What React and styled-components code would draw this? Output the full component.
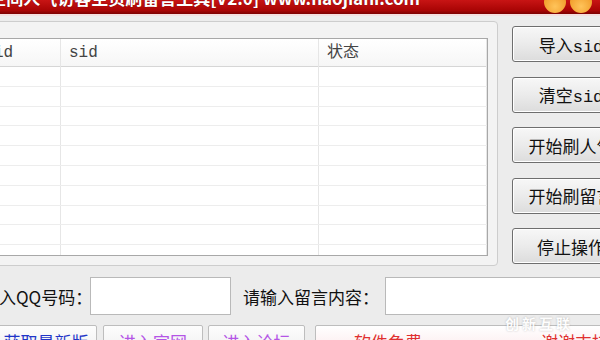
import React from 'react';
import styled, { createGlobalStyle } from 'styled-components';

const GlobalStyle = createGlobalStyle`
    body {
        margin: 0;
        background: #ececec;
        overflow: hidden;
        font-family: "Liberation Mono", "Noto Sans CJK SC", monospace;
    }
`
const Window = styled.div`
    position: relative;
    width: 680px;
    height: 340px;
    margin-left: -40px;
    overflow: hidden;
`
const TitleBar = styled.div`
    display: flex;
    align-items: flex-start;
    height: 14px;
    padding-right: 44px;
    overflow: hidden;
    background: linear-gradient(#c81414, #a80404 75%, #7c0000);
    border-bottom: 2px solid #f3dede;
`
const Title = styled.div`
    flex: 1;
    margin: -12px 0 0 3px;
    color: #fff;
    font: bold 17px "Noto Sans CJK SC", sans-serif;
    line-height: 20px;
    white-space: nowrap;
    text-shadow: 0 0 1px #600;
`
const Knob = styled.span`
    width: 22px;
    height: 22px;
    margin: -9px 4px 0 0;
    border-radius: 50%;
    background: radial-gradient(circle at 50% 70%, #ffc45a, #ea8a14);
    flex-shrink: 0;
`
const Main = styled.div`
    display: flex;
    margin-top: 5px;
`
const Panel = styled.div`
    width: 538px;
    height: 245px;
    box-sizing: border-box;
    padding: 16px 9px 9px 24px;
    border: 1px solid #cdcdcd;
    border-radius: 4px;
    background: #f3f3f3;
`
const List = styled.div`
    height: 100%;
    box-sizing: border-box;
    border: 1px solid #a8a8a8;
    background: #fff;
    overflow: hidden;
`
const Row = styled.div`
    display: grid;
    grid-template-columns: 75px 258px 1fr;
    height: ${p => p.$head ? '28px' : '19.8px'};
    box-sizing: border-box;
    border-bottom: 1px solid ${p => p.$head ? '#d6d6d6' : '#ededed'};
    background: ${p => p.$head ? 'linear-gradient(#ffffff, #f6f6f6)' : '#fff'};
`
const Cell = styled.div`
    padding-left: 8px;
    border-right: 1px solid #e6e6e6;
    color: #444;
    font-size: 16px;
    line-height: 28px;
`
const Side = styled.div`
    display: flex;
    flex-direction: column;
    gap: 14.5px;
    padding-top: 5px;
    margin-left: 14px;
`
const SideButton = styled.button`
    width: 118px;
    height: 36px;
    padding: 0;
    border: 1px solid #6e6e6e;
    border-radius: 3px;
    background: linear-gradient(#f7f7f7, #ebebeb 50%, #dcdcdc);
    box-shadow: inset 0 0 0 1px #fff;
    color: #111;
    font: 17px "Liberation Mono", "Noto Sans CJK SC", monospace;
    white-space: nowrap;
`
const InputRow = styled.div`
    display: flex;
    align-items: center;
    margin-top: 11px;
    padding-left: 5px;
`
const Label = styled.span`
    width: ${p => p.$w}px;
    margin-left: ${p => p.$gap || 0}px;
    color: #111;
    font: 17px "Noto Sans CJK SC", sans-serif;
    white-space: nowrap;
    flex-shrink: 0;
`
const Field = styled.input`
    width: ${p => p.$w}px;
    height: 38px;
    box-sizing: border-box;
    border: 1px solid #b9b9b9;
    background: #fff;
    outline: none;
    flex-shrink: 0;
`
const BottomRow = styled.div`
    display: flex;
    margin-top: 10px;
    padding-left: 35px;
`
const LinkButton = styled.button`
    width: ${p => p.$w}px;
    height: 30px;
    margin-left: ${p => p.$gap || 0}px;
    padding: 4px 0 0 ${p => p.$indent || 0}px;
    border: 1px solid #bdbdbd;
    border-radius: 2px;
    background: ${p => p.$bg || 'linear-gradient(#fdfdfd, #efefef)'};
    color: ${p => p.$color};
    font: 17px "Noto Sans CJK SC", sans-serif;
    line-height: 20px;
    text-align: ${p => p.$indent ? 'left' : 'center'};
    white-space: nowrap;
    flex-shrink: 0;
`
const Watermark = styled.div`
    position: absolute;
    left: 545px;
    top: 313px;
    color: #fff;
    font: bold 14px "Noto Sans CJK SC", sans-serif;
    letter-spacing: 3px;
    opacity: 0.9;
    text-shadow: 0 0 2px rgba(0, 0, 0, 0.25);
`

const rows = Array.from({ length: 10 });

const App = () => {
    return <Window>
        <GlobalStyle />
        <TitleBar>
            <Title>QQ空间人气访客主页刷留言工具[V2.0] www.haojiani.com</Title>
            <Knob />
            <Knob />
        </TitleBar>
        <Main>
            <Panel>
                <List>
                    <Row $head>
                        <Cell>id</Cell>
                        <Cell>sid</Cell>
                        <Cell>状态</Cell>
                    </Row>
                    {rows.map((_, i) => (
                        <Row key={i}>
                            <Cell />
                            <Cell />
                            <Cell />
                        </Row>
                    ))}
                </List>
            </Panel>
            <Side>
                <SideButton>导入sid</SideButton>
                <SideButton>清空sid</SideButton>
                <SideButton>开始刷人气</SideButton>
                <SideButton>开始刷留言</SideButton>
                <SideButton>停止操作</SideButton>
            </Side>
        </Main>
        <InputRow>
            <Label $w={125}>请输入QQ号码：</Label>
            <Field $w={141} />
            <Label $w={142} $gap={12}>请输入留言内容：</Label>
            <Field $w={300} />
        </InputRow>
        <BottomRow>
            <LinkButton $w={102} $color="#1f35c8">获取最新版</LinkButton>
            <LinkButton $w={100} $gap={6} $color="#b455e6">进入官网</LinkButton>
            <LinkButton $w={97} $gap={5} $color="#b455e6">进入论坛</LinkButton>
            <LinkButton $w={330} $gap={10} $indent={38} $color="#e03030" $bg="linear-gradient(#ffffff, #fbe8ea)">
                软件免费　　　　　　　谢谢支持
            </LinkButton>
        </BottomRow>
        <Watermark>创新互联</Watermark>
    </Window>;
};

export default App;
